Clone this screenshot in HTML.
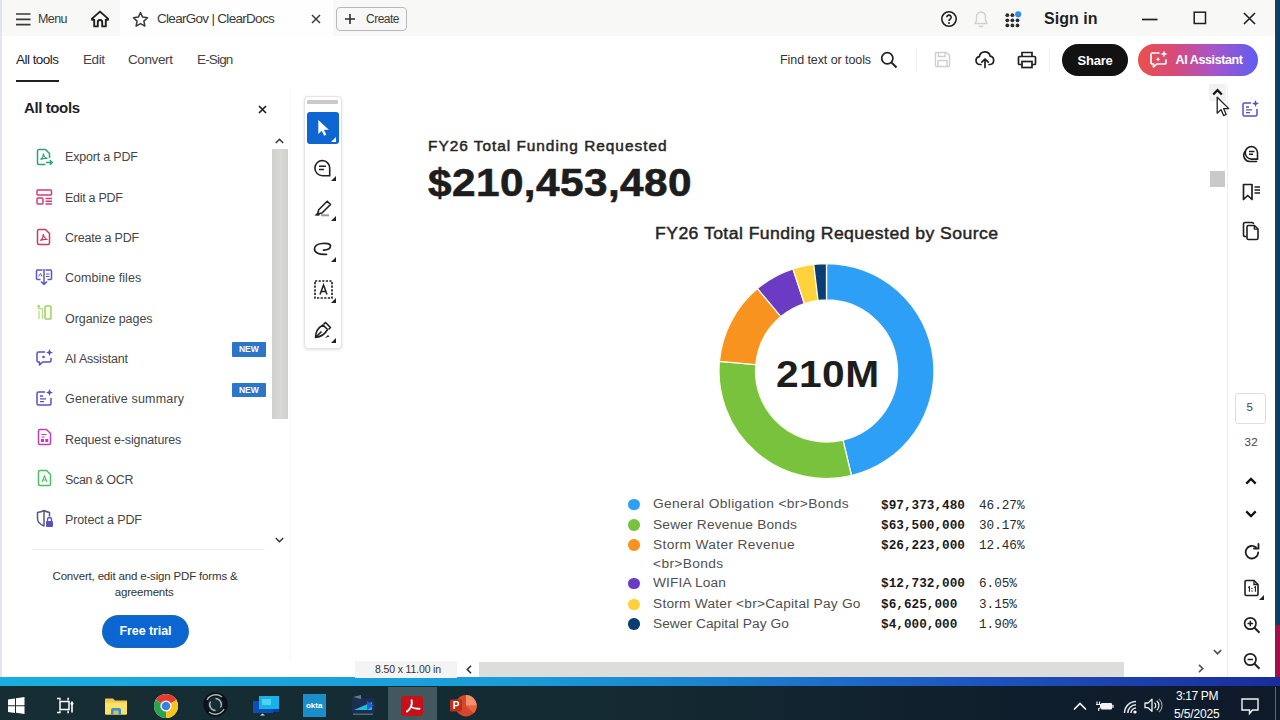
<!DOCTYPE html>
<html lang="en"><head>
<meta charset="utf-8">
<title>ClearGov | ClearDocs</title>
<style>
*{box-sizing:border-box;margin:0;padding:0}
html,body{width:1280px;height:720px;overflow:hidden}
body{position:relative;background:#0b2a66;font-family:"Liberation Sans",sans-serif;color:#2c2c2c}
.abs{position:absolute}
.t{position:absolute;white-space:nowrap;line-height:1}
svg{position:absolute;overflow:visible}
/* desktop strips */
#deskR{left:1274.5px;top:0;width:6px;height:625px;background:linear-gradient(90deg,#17434f 0,#17434f 2px,#063a7c 3.5px)}
#deskR2{left:1274.5px;top:625px;width:6px;height:53px;background:#a40f47}
#band{left:0;top:677px;width:1280px;height:10px;background:linear-gradient(90deg,#19aee0 0%,#1a9cd8 40%,#1c84d0 55%,#1d58c2 75%,#1a2c9c 100%)}
#taskbar{left:0;top:686px;width:1280px;height:34px;background:linear-gradient(90deg,#162d34 0%,#152b33 45%,#0f1e2c 80%,#0e1a2a 100%)}
/* window */
#win{left:0;top:0;width:1275px;height:678px;background:#fff}
#titlebar{left:0;top:0;width:1275px;height:36px;background:#f8f8f7}
#tab{left:120px;top:0;width:213px;height:36.5px;background:#fefefe}
#edgeL{left:0;top:0;width:1.5px;height:678px;background:#e2e2fa}
</style>
</head>
<body>
<div id="win" class="abs"></div>
<div id="titlebar" class="abs"></div>
<div id="tab" class="abs"></div>
<div id="edgeL" class="abs"></div>
<div id="deskR" class="abs"></div>
<div id="deskR2" class="abs"></div>
<div id="band" class="abs"></div>
<div id="taskbar" class="abs"></div>
<!--TITLEBAR-->
<svg style="left:16px;top:12px" width="15" height="15" viewBox="0 0 15 15"><path d="M0 2h14.5M0 7.3h14.5M0 12.6h14.5" stroke="#3a3a3a" stroke-width="1.7" fill="none"></path></svg>
<span class="t" style="font-size: 12.5px; color: rgb(58, 58, 58); letter-spacing: -0.57px; left: 38px; top: 12.9px;">Menu</span>
<svg style="left:90px;top:10px" width="20" height="18" viewBox="0 0 20 18"><path d="M2 8.6 10 1.6l8 7v1.2h-2.2v6.6h-3.6v-4.2a2.2 2.2 0 0 0-4.4 0v4.2H4.200V9.800H2z" stroke="#1f1f1f" stroke-width="1.9" fill="none" stroke-linejoin="round"></path></svg>
<svg style="left:132px;top:11px" width="17" height="17" viewBox="0 0 17 17"><path d="M8.500 1.500l2.100 4.600 5 .6-3.700 3.400 1 5-4.400-2.500-4.400 2.500 1-5L1.400 6.700l5-.6z" stroke="#3a3a3a" stroke-width="1.500" fill="none" stroke-linejoin="round"></path></svg>
<span class="t" style="font-size: 13.5px; color: rgb(58, 58, 58); letter-spacing: -0.702px; left: 157px; top: 12.41px;">ClearGov | ClearDocs</span>
<svg style="left:311px;top:14px" width="10" height="10" viewBox="0 0 10 10"><path d="M1 1l8 8M9 1l-8 8" stroke="#3a3a3a" stroke-width="1.500" fill="none"></path></svg>
<div class="abs" style="left:336px;top:7px;width:71px;height:24px;border:1px solid #b9b9b9;border-radius:4px;background:#f8f8f8"></div>
<svg style="left:345px;top:14px" width="10" height="10" viewBox="0 0 10 10"><path d="M5 0v10M0 5h10" stroke="#2c2c2c" stroke-width="1.600" fill="none"></path></svg>
<span class="t" style="font-size: 12px; color: rgb(58, 58, 58); letter-spacing: -0.505px; left: 366px; top: 13.14px;">Create</span>
<svg style="left:940px;top:10px" width="18" height="18" viewBox="0 0 18 18"><circle cx="9" cy="9" r="7.200" stroke="#222" stroke-width="1.600" fill="none"></circle><path d="M6.800 7.300a2.200 2.200 0 1 1 3.300 1.900c-.8.500-1.100.9-1.100 1.700" stroke="#222" stroke-width="1.600" fill="none"></path><circle cx="9" cy="13" r="1" fill="#222"></circle></svg>
<svg style="left:973px;top:10px" width="16" height="18" viewBox="0 0 16 18"><path d="M8 2a4.500 4.500 0 0 0-4.500 4.500v4L2 13.500h12l-1.500-3v-4A4.500 4.500 0 0 0 8 2zM6.300 15.500a1.800 1.800 0 0 0 3.400 0" stroke="#d2d2d2" stroke-width="1.500" fill="none" stroke-linejoin="round"></path></svg>
<svg style="left:1005px;top:11px" width="18" height="17" viewBox="0 0 18 17"><g fill="#2c2c2c"><circle cx="2.3" cy="4.2" r="1.900"></circle><circle cx="2.3" cy="9.3" r="1.900"></circle><circle cx="2.3" cy="14.4" r="1.900"></circle><circle cx="7.4" cy="4.2" r="1.900"></circle><circle cx="7.4" cy="9.3" r="1.900"></circle><circle cx="7.4" cy="14.4" r="1.900"></circle><circle cx="12.5" cy="9.3" r="1.900"></circle><circle cx="12.5" cy="14.4" r="1.900"></circle></g><circle cx="13.200" cy="3.300" r="3.100" fill="#2f8fe6"></circle></svg>
<span class="t" style="font-size: 16px; font-weight: 700; color: rgb(31, 31, 31); letter-spacing: 0.025px; left: 1044px; top: 10.69px;">Sign in</span>
<svg style="left:1142px;top:18px" width="16" height="3" viewBox="0 0 16 3"><path d="M0 1.500h15.500" stroke="#1f1f1f" stroke-width="1.700"></path></svg>
<svg style="left:1193px;top:11px" width="14" height="14" viewBox="0 0 14 14"><rect x="1.200" y="1.200" width="11.300" height="11.300" stroke="#1f1f1f" stroke-width="1.500" fill="none"></rect></svg>
<svg style="left:1243px;top:12px" width="13" height="13" viewBox="0 0 13 13"><path d="M1 1l11 11M12 1L1 12" stroke="#1f1f1f" stroke-width="1.600" fill="none"></path></svg>
<!--TOOLBAR-->
<span class="t" style="font-size: 13.5px; color: rgb(31, 31, 31); letter-spacing: -0.531px; left: 16px; top: 53.41px;">All tools</span>
<div class="abs" style="left:16px;top:80px;width:43px;height:2px;background:#222"></div>
<span class="t" style="font-size: 13.5px; color: rgb(68, 68, 68); letter-spacing: -0.441px; left: 83px; top: 53.41px;">Edit</span>
<span class="t" style="font-size: 13.5px; color: rgb(68, 68, 68); letter-spacing: -0.397px; left: 128px; top: 53.41px;">Convert</span>
<span class="t" style="font-size: 13.5px; color: rgb(68, 68, 68); letter-spacing: -0.839px; left: 197px; top: 53.41px;">E-Sign</span>
<span class="t" style="font-size: 12.5px; color: rgb(51, 51, 51); letter-spacing: -0.078px; left: 780px; top: 53.9px;">Find text or tools</span>
<svg style="left:880px;top:51px" width="18" height="18" viewBox="0 0 18 18"><circle cx="7.300" cy="7.300" r="5.600" stroke="#222" stroke-width="1.700" fill="none"></circle><path d="M11.500 11.500l5 5" stroke="#222" stroke-width="1.900"></path></svg>
<div class="abs" style="left:916px;top:48px;width:1px;height:24px;background:#f1f1f1"></div>
<svg style="left:934px;top:51px" width="17" height="17" viewBox="0 0 17 17"><path d="M1.500 2.500a1 1 0 0 1 1-1h10l3 3v10a1 1 0 0 1-1 1h-12a1 1 0 0 1-1-1zM4.500 1.500v4h6.500v-4M4 15.500v-6h9v6" stroke="#cfcfcf" stroke-width="1.400" fill="none"></path></svg>
<svg style="left:975px;top:50px" width="20" height="19" viewBox="0 0 20 19"><path d="M6 14.500H5a4 4 0 0 1-.6-7.950A5.500 5.500 0 0 1 15.200 6.200 4.200 4.200 0 0 1 15 14.500h-1" stroke="#1f1f1f" stroke-width="1.700" fill="none" stroke-linecap="round"></path><path d="M10 17.500v-8M6.800 12.200 10 9l3.200 3.200" stroke="#1f1f1f" stroke-width="1.700" fill="none" stroke-linecap="round" stroke-linejoin="round"></path></svg>
<svg style="left:1017px;top:51px" width="20" height="18" viewBox="0 0 20 18"><path d="M5 5.500v-4h10v4M5 13.500H2.500a1 1 0 0 1-1-1v-6a1 1 0 0 1 1-1h15a1 1 0 0 1 1 1v6a1 1 0 0 1-1 1H15" stroke="#1f1f1f" stroke-width="1.700" fill="none"></path><rect x="5" y="10.500" width="10" height="6" stroke="#1f1f1f" stroke-width="1.700" fill="none"></rect></svg>
<div class="abs" style="left:1049px;top:48px;width:1px;height:24px;background:#f1f1f1"></div>
<div class="abs" style="left:1061.500px;top:43.500px;width:66.500px;height:32px;border-radius:16px;background:#121212"></div>
<span class="t" style="font-size: 13px; font-weight: 700; color: rgb(255, 255, 255); letter-spacing: -0.228px; left: 1077.5px; top: 53.66px;">Share</span>
<div class="abs" style="left:1137.500px;top:43.500px;width:120px;height:32px;border-radius:16px;background:linear-gradient(90deg,#e9514c 0%,#d84a78 30%,#a855c8 62%,#5f5df2 100%)"></div>
<svg style="left:1149px;top:50px" width="20" height="20" viewBox="0 0 20 20"><path d="M10.500 3H3.500a1.500 1.500 0 0 0-1.500 1.500v8a1.500 1.500 0 0 0 1.500 1.500h1v3l3.200-3h7.800a1.500 1.500 0 0 0 1.500-1.500V9.500" stroke="#fff" stroke-width="1.700" fill="none" stroke-linejoin="round"></path><path d="M15 .5l1 2.500 2.500 1-2.500 1-1 2.500-1-2.500-2.500-1 2.500-1z" fill="#fff"></path><path d="M9 7l.7 1.600 1.600.7-1.600.7L9 11.600l-.7-1.600-1.600-.7 1.600-.7z" fill="#fff"></path></svg>
<span class="t" style="font-size: 12.5px; font-weight: 700; color: rgb(255, 255, 255); letter-spacing: -0.398px; left: 1175.5px; top: 53.9px;">AI Assistant</span>
<!--LEFTPANEL-->
<div class="abs" style="left:290px;top:86px;width:1px;height:575px;background:#f9f9f9"></div>
<span class="t" style="font-size: 15px; font-weight: 700; color: rgb(31, 31, 31); letter-spacing: -0.397px; left: 24px; top: 100.18px;">All tools</span>
<svg style="left:257.500px;top:105px" width="9" height="9" viewBox="0 0 9 9"><path d="M1 1l7 7M8 1L1 8" stroke="#1f1f1f" stroke-width="1.700" fill="none"></path></svg>
<svg style="left:275px;top:138px" width="9" height="6" viewBox="0 0 9 6"><path d="M.8 5l3.700-3.700L8.200 5" stroke="#333" stroke-width="1.500" fill="none"></path></svg>
<div class="abs" style="left:272px;top:149px;width:16px;height:270px;background:linear-gradient(90deg,#cfcfcc,#d8d8d5 50%,#cfcfcc)"></div>
<svg style="left:275px;top:537px" width="9" height="6" viewBox="0 0 9 6"><path d="M.8 1l3.700 3.700L8.200 1" stroke="#333" stroke-width="1.500" fill="none"></path></svg>
<span class="t" style="font-size: 12.5px; color: rgb(70, 70, 70); letter-spacing: -0.194px; left: 65px; top: 151.4px;">Export a PDF</span>
<span class="t" style="font-size: 12.5px; color: rgb(70, 70, 70); letter-spacing: -0.294px; left: 65px; top: 191.9px;">Edit a PDF</span>
<span class="t" style="font-size: 12.5px; color: rgb(70, 70, 70); letter-spacing: -0.21px; left: 65px; top: 231.9px;">Create a PDF</span>
<span class="t" style="font-size: 12.5px; color: rgb(70, 70, 70); letter-spacing: 0.036px; left: 65px; top: 272.4px;">Combine files</span>
<span class="t" style="font-size: 12.5px; color: rgb(70, 70, 70); letter-spacing: -0.055px; left: 65px; top: 312.9px;">Organize pages</span>
<span class="t" style="font-size: 12.5px; color: rgb(70, 70, 70); letter-spacing: -0.218px; left: 65px; top: 352.9px;">AI Assistant</span>
<span class="t" style="font-size: 12.5px; color: rgb(70, 70, 70); letter-spacing: 0.177px; left: 65px; top: 393.2px;">Generative summary</span>
<span class="t" style="font-size: 12.5px; color: rgb(70, 70, 70); letter-spacing: -0.131px; left: 65px; top: 433.5px;">Request e-signatures</span>
<span class="t" style="font-size: 12.5px; color: rgb(70, 70, 70); letter-spacing: -0.346px; left: 65px; top: 473.9px;">Scan &amp; OCR</span>
<span class="t" style="font-size: 12.5px; color: rgb(70, 70, 70); letter-spacing: -0.131px; left: 65px; top: 514.2px;">Protect a PDF</span>
<div class="abs" style="left:232px;top:342.2px;width:33.500px;height:14.500px;background:#2b76c9;border-radius:1px"></div>
<span class="t" style="font-size: 8.5px; font-weight: 700; color: rgb(255, 255, 255); left: 238.88px; top: 345.45px;">NEW</span>
<div class="abs" style="left:232px;top:382.5px;width:33.500px;height:14.500px;background:#2b76c9;border-radius:1px"></div>
<span class="t" style="font-size: 8.5px; font-weight: 700; color: rgb(255, 255, 255); left: 238.88px; top: 385.75px;">NEW</span>
<div class="abs" style="left:32px;top:549px;width:233px;height:1px;background:#f0f0f0"></div>
<span class="t" style="font-size: 11.5px; color: rgb(51, 51, 51); letter-spacing: -0.17px; left: 52.5px; top: 571.39px;">Convert, edit and e-sign PDF forms &amp;</span>
<span class="t" style="font-size: 11.5px; color: rgb(51, 51, 51); letter-spacing: -0.193px; left: 114.8px; top: 586.89px;">agreements</span>
<div class="abs" style="left:103px;top:616px;width:85px;height:31px;border-radius:16px;background:#0c66d2;box-shadow:0 0 0 1px #1a6f9c"></div>
<span class="t" style="font-size: 12.5px; font-weight: 700; color: rgb(255, 255, 255); letter-spacing: -0.081px; left: 119.46px; top: 625.4px;">Free trial</span>
<!--LPICONS-->
<svg style="left:35.5px;top:147.5px" width="17" height="18" viewBox="0 0 17 18"><path d="M9.500 16.500H3a1.500 1.500 0 0 1-1.500-1.500V3A1.500 1.500 0 0 1 3 1.500h6.500l4 4V10" stroke="#2f9e7d" stroke-width="1.500" fill="none" stroke-linejoin="round"></path><path d="M4.500 11.500c1.500-1 3-3.500 3-6 0 2.500 2 4.500 4 5-2.500-.3-5 .2-7 1z" stroke="#2f9e7d" stroke-width="1.100" fill="none"></path><path d="M10 14.500h6M13.800 12.200l2.400 2.300-2.400 2.300" stroke="#2f9e7d" stroke-width="1.500" fill="none"></path></svg>
<svg style="left:35.5px;top:189px" width="17" height="16" viewBox="0 0 17 16"><rect x="1" y="1" width="14.500" height="5" rx="1" stroke="#cf3a82" stroke-width="1.500" fill="none"></rect><rect x="1" y="9" width="6" height="6" rx="1" stroke="#cf3a82" stroke-width="1.500" fill="none"></rect><path d="M9.500 9.500h6.500M9.500 12.200h6.500M9.500 15h6.500" stroke="#cf3a82" stroke-width="1.400"></path></svg>
<svg style="left:35.5px;top:228px" width="16" height="18" viewBox="0 0 16 18"><path d="M3 1.500h6.500l4 4V15a1.500 1.500 0 0 1-1.500 1.500H3A1.500 1.500 0 0 1 1.500 15V3A1.500 1.500 0 0 1 3 1.500z" stroke="#cc3a5e" stroke-width="1.500" fill="none" stroke-linejoin="round"></path><path d="M4.300 12.500c1.500-1 3-4 3-6.500 0 2.500 2.200 5 4.200 5.500-2.500-.4-5.200.2-7.200 1z" stroke="#cc3a5e" stroke-width="1.200" fill="none"></path></svg>
<svg style="left:35px;top:268px" width="18" height="18" viewBox="0 0 18 18"><path d="M7.500 2H2.500a1 1 0 0 0-1 1v7.500a1 1 0 0 0 1 1h3M10.500 2h5a1 1 0 0 1 1 1v7.500a1 1 0 0 1-1 1h-3" stroke="#5359c9" stroke-width="1.500" fill="none"></path><path d="M9 1v15M6 13.500l3 3 3-3" stroke="#5359c9" stroke-width="1.500" fill="none"></path><path d="M3.500 8.500l2-3 1.500 3M11 6h3.500M11 8.500h3.500" stroke="#5359c9" stroke-width="1" fill="none"></path></svg>
<svg style="left:35.5px;top:303.5px" width="17" height="17" viewBox="0 0 17 17"><rect x="9" y="2" width="6" height="13" rx="1" stroke="#9ad255" stroke-width="1.500" fill="none"></rect><path d="M6.500 4.500v10.500M3 15V6.500M1.500 4.500h5" stroke="#b5dd88" stroke-width="1.300" fill="none"></path><path d="M1 2.200l2.500-1.700v3.400z" fill="#86c540"></path></svg>
<svg style="left:34.5px;top:349px" width="19" height="18" viewBox="0 0 19 18"><path d="M10 3H3.500A1.500 1.500 0 0 0 2 4.500v7A1.500 1.500 0 0 0 3.500 13h1v3l3.200-3h6.800a1.500 1.500 0 0 0 1.500-1.500V9" stroke="#5a4fc4" stroke-width="1.500" fill="none" stroke-linejoin="round"></path><path d="M14.500 0l1 2.500 2.500 1-2.500 1-1 2.500-1-2.500-2.500-1 2.500-1z" fill="#5a4fc4"></path><circle cx="8.500" cy="8" r="1.300" fill="#5a4fc4"></circle></svg>
<svg style="left:34.5px;top:389px" width="19" height="18" viewBox="0 0 19 18"><path d="M10 3H3.500A1.500 1.500 0 0 0 2 4.500v10A1.500 1.500 0 0 0 3.500 16h11a1.500 1.500 0 0 0 1.500-1.500V9" stroke="#5a4fc4" stroke-width="1.500" fill="none" stroke-linejoin="round"></path><path d="M14.500 0l1 2.500 2.500 1-2.500 1-1 2.500-1-2.500-2.500-1 2.500-1z" fill="#5a4fc4"></path><path d="M5 7h3M5 9.800h6M5 12.600h4" stroke="#5a4fc4" stroke-width="1.300"></path></svg>
<svg style="left:36.5px;top:428px" width="16" height="18" viewBox="0 0 16 18"><path d="M3 1.500h6.500l4 4V15a1.500 1.500 0 0 1-1.500 1.500H3A1.500 1.500 0 0 1 1.500 15V3A1.500 1.500 0 0 1 3 1.500z" stroke="#c23cba" stroke-width="1.500" fill="none" stroke-linejoin="round"></path><path d="M4.500 6.500h5M4.500 9h3" stroke="#c23cba" stroke-width="1.200"></path><rect x="4" y="11" width="3" height="3" fill="#c23cba"></rect><rect x="8.300" y="11" width="3" height="3" fill="#c23cba"></rect></svg>
<svg style="left:36.5px;top:469px" width="16" height="18" viewBox="0 0 16 18"><path d="M3 1.500h6.500l4 4V15a1.500 1.500 0 0 1-1.500 1.500H3A1.500 1.500 0 0 1 1.500 15V3A1.500 1.500 0 0 1 3 1.500z" stroke="#4fbb62" stroke-width="1.500" fill="none" stroke-linejoin="round"></path><path d="M5 13l2.500-6 2.500 6M6 11h3" stroke="#4fbb62" stroke-width="1.100" fill="none"></path></svg>
<svg style="left:35.5px;top:509px" width="18" height="19" viewBox="0 0 18 19"><path d="M8 1.500C5.500 2.800 3.500 3.200 1.500 3.500v6c0 3.500 3 6 6.500 7.500V1.500zM8 1.500c2 1 3.500 1.500 5.500 2v4" stroke="#555c78" stroke-width="1.500" fill="none" stroke-linejoin="round"></path><rect x="10" y="12" width="7" height="6" rx="1" fill="#5a4fc4"></rect><path d="M11.500 12v-1.500a2 2 0 0 1 4 0V12" stroke="#5a4fc4" stroke-width="1.300" fill="none"></path></svg>
<!--QUICKTOOLS-->
<div class="abs" style="left:303.500px;top:95.500px;width:38.500px;height:253.500px;background:#fff;border:1px solid #e3e3e3;border-radius:4px;box-shadow:0 1px 3px rgba(0,0,0,.12)"></div>
<div class="abs" style="left:307px;top:99.500px;width:31px;height:4px;background:#c9c9c9;border-radius:1px"></div>
<div class="abs" style="left:306.500px;top:112px;width:32.500px;height:32px;background:#0d66d2;border-radius:3px"></div>
<svg style="left:316px;top:119px" width="14" height="18" viewBox="0 0 14 18"><path d="M2.300 1v14l3.500-3.300 2.300 5 2.200-1-2.300-4.900h4.800z" fill="#fff"></path></svg>
<svg style="left:330.5px;top:136.5px" width="5" height="5" viewBox="0 0 5 5"><path d="M5 0v5H0z" fill="#fff"></path></svg>
<svg style="left:312.5px;top:158.5px" width="19" height="19" viewBox="0 0 19 19"><path d="M9.500 1.500a7.600 7.600 0 1 0 0 15.200h7.200V9.100A7.600 7.600 0 0 0 9.500 1.500z" stroke="#222" stroke-width="1.600" fill="none"></path><path d="M6 7.200h7M6 10.400h5" stroke="#222" stroke-width="1.500"></path></svg>
<svg style="left:330.5px;top:176px" width="5" height="5" viewBox="0 0 5 5"><path d="M5 0v5H0z" fill="#222"></path></svg>
<svg style="left:313.5px;top:199.5px" width="19" height="17" viewBox="0 0 19 17"><path d="M13.200 1.200l3.300 3.300L8 13l-4.300 1 1-4.300z" stroke="#222" stroke-width="1.600" fill="none" stroke-linejoin="round"></path><path d="M0.500 15.500l3-3 2.500 2.500-1.500.8z" fill="#222"></path><path d="M7 15.300h8" stroke="#9a9a9a" stroke-width="2"></path></svg>
<svg style="left:330.5px;top:216px" width="5" height="5" viewBox="0 0 5 5"><path d="M5 0v5H0z" fill="#222"></path></svg>
<svg style="left:313px;top:242px" width="19" height="14" viewBox="0 0 19 14"><path d="M10.500 8.200C14 8 17.500 6.500 17.500 4 17.500 1.500 13 1 9 1.500 5 2 1.500 4 1.500 7c0 3.500 4.500 6 12 5.300" stroke="#222" stroke-width="1.700" fill="none" stroke-linecap="round"></path></svg>
<svg style="left:330.5px;top:256.5px" width="5" height="5" viewBox="0 0 5 5"><path d="M5 0v5H0z" fill="#222"></path></svg>
<svg style="left:313.5px;top:280px" width="19" height="19" viewBox="0 0 19 19"><rect x="1" y="1" width="17" height="17" stroke="#222" stroke-width="1.700" stroke-dasharray="2.200 1.400" fill="none"></rect><path d="M6 14.500l3.500-9.500 3.500 9.500M7.200 11.500h4.600" stroke="#222" stroke-width="1.500" fill="none"></path></svg>
<svg style="left:330.5px;top:297.5px" width="5" height="5" viewBox="0 0 5 5"><path d="M5 0v5H0z" fill="#222"></path></svg>
<svg style="left:313.5px;top:321px" width="18" height="18" viewBox="0 0 18 18"><path d="M1.500 16.500c0-5 2-9.500 7.500-12.500l4.500 4.500C10.500 14 6.500 16 1.500 16.500zM1.500 16.500l6-6" stroke="#222" stroke-width="1.600" fill="none" stroke-linejoin="round"></path><path d="M9.500 3.500l2-2 5 5-2 2" stroke="#222" stroke-width="1.600" fill="none" stroke-linejoin="round"></path><path d="M11 17l3-3 1.500 1.500z" fill="#222"></path></svg>
<svg style="left:330.5px;top:337.5px" width="5" height="5" viewBox="0 0 5 5"><path d="M5 0v5H0z" fill="#222"></path></svg>
<!--DOC-->
<span class="t doc" style="font-size: 14px; color: rgb(38, 38, 38); -webkit-text-stroke: 0.45px rgb(38, 38, 38); letter-spacing: 0.891px; transform-origin: 0px 50%; transform: scaleX(1.1); left: 428.3px; top: 139.17px;">FY26 Total Funding Requested</span>
<span class="t doc" style="font-size: 38.5px; font-weight: 700; color: rgb(29, 29, 29); -webkit-text-stroke: 0.6px rgb(29, 29, 29); letter-spacing: 0.374px; transform-origin: 0px 50%; transform: scaleX(1.1); left: 428px; top: 163.51px;">$210,453,480</span>
<span class="t doc" style="font-size: 16px; color: rgb(38, 38, 38); -webkit-text-stroke: 0.45px rgb(38, 38, 38); letter-spacing: 0.408px; transform-origin: 0px 50%; transform: scaleX(1.1); left: 654.8px; top: 225.69px;">FY26 Total Funding Requested by Source</span>
<svg style="left:0;top:0" width="1280" height="720" viewBox="0 0 1280 720"><path d="M826.50 263.50A107.5 107.5 0 0 1 851.46 475.56L842.99 440.06A71 71 0 0 0 826.50 300.00Z" fill="#2d9ff6" stroke="#fbfbe8" stroke-width="1.300" stroke-linejoin="round"></path><path d="M851.46 475.56A107.5 107.5 0 0 1 719.44 361.29L755.79 364.58A71 71 0 0 0 842.99 440.06Z" fill="#78c23e" stroke="#fbfbe8" stroke-width="1.300" stroke-linejoin="round"></path><path d="M719.44 361.29A107.5 107.5 0 0 1 757.46 288.60L780.90 316.58A71 71 0 0 0 755.79 364.58Z" fill="#f7931e" stroke="#fbfbe8" stroke-width="1.300" stroke-linejoin="round"></path><path d="M757.46 288.60A107.5 107.5 0 0 1 792.96 268.87L804.35 303.54A71 71 0 0 0 780.90 316.58Z" fill="#6c3bc4" stroke="#fbfbe8" stroke-width="1.300" stroke-linejoin="round"></path><path d="M792.96 268.87A107.5 107.5 0 0 1 813.70 264.27L818.04 300.51A71 71 0 0 0 804.35 303.54Z" fill="#fdd23c" stroke="#fbfbe8" stroke-width="1.300" stroke-linejoin="round"></path><path d="M813.70 264.27A107.5 107.5 0 0 1 826.50 263.50L826.50 300.00A71 71 0 0 0 818.04 300.51Z" fill="#0a3d73" stroke="#fbfbe8" stroke-width="1.300" stroke-linejoin="round"></path></svg>
<span class="t doc" style="font-size: 37px; font-weight: 700; color: rgb(29, 29, 29); letter-spacing: 0.382px; transform-origin: 0px 50%; transform: scaleX(1.1); left: 776.46px; top: 356.24px;">210M</span>
<div class="abs" style="left:628px;top:498.8px;width:11.500px;height:11.500px;border-radius:50%;background:#2d9ff6"></div>
<span class="t doc" style="font-size: 12.5px; color: rgb(80, 80, 80); letter-spacing: 0.332px; transform-origin: 0px 50%; transform: scaleX(1.1); left: 652.8px; top: 498.3px;">General Obligation &lt;br&gt;Bonds</span>
<span class="t" style="font-family: &quot;Liberation Mono&quot;, monospace; font-size: 12.7px; font-weight: 700; color: rgb(26, 26, 26); letter-spacing: 0.021px; left: 881px; top: 499.5px;">$97,373,480</span>
<span class="t" style="font-family: &quot;Liberation Mono&quot;, monospace; font-size: 12.7px; color: rgb(42, 42, 42); letter-spacing: -0.031px; left: 979px; top: 499.5px;">46.27%</span>
<div class="abs" style="left:628px;top:519.0px;width:11.500px;height:11.500px;border-radius:50%;background:#78c23e"></div>
<span class="t doc" style="font-size: 12.5px; color: rgb(80, 80, 80); letter-spacing: 0.161px; transform-origin: 0px 50%; transform: scaleX(1.1); left: 652.8px; top: 518.5px;">Sewer Revenue Bonds</span>
<span class="t" style="font-family: &quot;Liberation Mono&quot;, monospace; font-size: 12.7px; font-weight: 700; color: rgb(26, 26, 26); letter-spacing: 0.021px; left: 881px; top: 519.7px;">$63,500,000</span>
<span class="t" style="font-family: &quot;Liberation Mono&quot;, monospace; font-size: 12.7px; color: rgb(42, 42, 42); letter-spacing: -0.031px; left: 979px; top: 519.7px;">30.17%</span>
<div class="abs" style="left:628px;top:539.1px;width:11.500px;height:11.500px;border-radius:50%;background:#f7931e"></div>
<span class="t doc" style="font-size: 12.5px; color: rgb(80, 80, 80); letter-spacing: 0.31px; transform-origin: 0px 50%; transform: scaleX(1.1); left: 652.8px; top: 538.6px;">Storm Water Revenue</span>
<span class="t" style="font-family: &quot;Liberation Mono&quot;, monospace; font-size: 12.7px; font-weight: 700; color: rgb(26, 26, 26); letter-spacing: 0.021px; left: 881px; top: 539.8px;">$26,223,000</span>
<span class="t" style="font-family: &quot;Liberation Mono&quot;, monospace; font-size: 12.7px; color: rgb(42, 42, 42); letter-spacing: -0.031px; left: 979px; top: 539.8px;">12.46%</span>
<div class="abs" style="left:628px;top:577.5px;width:11.500px;height:11.500px;border-radius:50%;background:#6c3bc4"></div>
<span class="t doc" style="font-size: 12.5px; color: rgb(80, 80, 80); letter-spacing: 0.105px; transform-origin: 0px 50%; transform: scaleX(1.1); left: 652.8px; top: 577px;">WIFIA Loan</span>
<span class="t" style="font-family: &quot;Liberation Mono&quot;, monospace; font-size: 12.7px; font-weight: 700; color: rgb(26, 26, 26); letter-spacing: 0.021px; left: 881px; top: 578.2px;">$12,732,000</span>
<span class="t" style="font-family: &quot;Liberation Mono&quot;, monospace; font-size: 12.7px; color: rgb(42, 42, 42); letter-spacing: -0.036px; left: 979px; top: 578.2px;">6.05%</span>
<div class="abs" style="left:628px;top:598.7px;width:11.500px;height:11.500px;border-radius:50%;background:#fdd23c"></div>
<span class="t doc" style="font-size: 12.5px; color: rgb(80, 80, 80); letter-spacing: 0.196px; transform-origin: 0px 50%; transform: scaleX(1.1); left: 652.8px; top: 598.2px;">Storm Water &lt;br&gt;Capital Pay Go</span>
<span class="t" style="font-family: &quot;Liberation Mono&quot;, monospace; font-size: 12.7px; font-weight: 700; color: rgb(26, 26, 26); letter-spacing: 0.026px; left: 881px; top: 599.4px;">$6,625,000</span>
<span class="t" style="font-family: &quot;Liberation Mono&quot;, monospace; font-size: 12.7px; color: rgb(42, 42, 42); letter-spacing: -0.036px; left: 979px; top: 599.4px;">3.15%</span>
<div class="abs" style="left:628px;top:618.1px;width:11.500px;height:11.500px;border-radius:50%;background:#0a3d73"></div>
<span class="t doc" style="font-size: 12.5px; color: rgb(80, 80, 80); letter-spacing: 0.024px; transform-origin: 0px 50%; transform: scaleX(1.1); left: 652.8px; top: 617.6px;">Sewer Capital Pay Go</span>
<span class="t" style="font-family: &quot;Liberation Mono&quot;, monospace; font-size: 12.7px; font-weight: 700; color: rgb(26, 26, 26); letter-spacing: 0.026px; left: 881px; top: 618.8px;">$4,000,000</span>
<span class="t" style="font-family: &quot;Liberation Mono&quot;, monospace; font-size: 12.7px; color: rgb(42, 42, 42); letter-spacing: -0.036px; left: 979px; top: 618.8px;">1.90%</span>
<span class="t doc" style="font-size: 12.5px; color: rgb(80, 80, 80); letter-spacing: 0.324px; transform-origin: 0px 50%; transform: scaleX(1.1); left: 652.8px; top: 558px;">&lt;br&gt;Bonds</span>
<!--RIGHTRAIL-->
<div class="abs" style="left:1226.500px;top:86px;width:1px;height:591px;background:#eeeeee"></div>
<div class="abs" style="left:1209px;top:84px;width:17px;height:17px;background:#f1f1f1"></div>
<svg style="left:1211.5px;top:88px" width="11" height="8" viewBox="0 0 11 8"><path d="M1.200 6.500l4.300-4.300 4.300 4.300" stroke="#111" stroke-width="2.300" fill="none"></path></svg>
<div class="abs" style="left:1210px;top:171px;width:15px;height:16px;background:#c9c9c9"></div>
<svg style="left:1215.5px;top:95.5px" width="14" height="22" viewBox="0 0 14 22"><path d="M1.200 1.200v16l3.800-3.600 2.600 6 2.600-1.100-2.600-5.900h5.200z" fill="#fff" stroke="#222" stroke-width="1.300" stroke-linejoin="round"></path></svg>
<svg style="left:1240.5px;top:99.5px" width="19" height="18" viewBox="0 0 19 18"><path d="M10 3H3.500A1.500 1.500 0 0 0 2 4.500v10A1.500 1.500 0 0 0 3.500 16h11a1.500 1.500 0 0 0 1.500-1.500V9" stroke="#5a4fc4" stroke-width="1.500" fill="none" stroke-linejoin="round"></path><path d="M14.500 0l1 2.500 2.500 1-2.500 1-1 2.500-1-2.500-2.500-1 2.500-1z" fill="#5a4fc4"></path><path d="M5 7h3M5 9.800h6M5 12.600h4" stroke="#5a4fc4" stroke-width="1.300"></path></svg>
<svg style="left:1240.5px;top:145px" width="19" height="18" viewBox="0 0 19 18"><path d="M10.500 1.500a6.300 6.300 0 1 0 0 12.600h6V7.800a6.300 6.300 0 0 0-6-6.300z" stroke="#1f1f1f" stroke-width="1.600" fill="none"></path><path d="M4 6.500a6.300 6.300 0 0 0 4.500 10h7" stroke="#1f1f1f" stroke-width="1.600" fill="none" stroke-linecap="round"></path><path d="M8 6.500h5.500M8 9.300h4" stroke="#1f1f1f" stroke-width="1.400"></path></svg>
<svg style="left:1241.5px;top:183px" width="19" height="18" viewBox="0 0 19 18"><path d="M1.500 1.500h8.500v15l-4.250-4-4.250 4z" stroke="#1f1f1f" stroke-width="1.700" fill="none" stroke-linejoin="round"></path><path d="M12.500 4h5.500M12.500 7h5.500M12.500 10h5.500" stroke="#1f1f1f" stroke-width="1.400"></path></svg>
<svg style="left:1241.5px;top:221px" width="18" height="20" viewBox="0 0 18 20"><path d="M4.500 15.500h-1.500a1.500 1.500 0 0 1-1.500-1.500V3a1.500 1.500 0 0 1 1.500-1.500h7a1.500 1.500 0 0 1 1.500 1.500" stroke="#1f1f1f" stroke-width="1.600" fill="none"></path><path d="M6.500 4.500h6l3.500 3.500v9a1.500 1.500 0 0 1-1.500 1.500h-8A1.500 1.500 0 0 1 5 17V6a1.500 1.500 0 0 1 1.500-1.500z" stroke="#1f1f1f" stroke-width="1.600" fill="#fff" stroke-linejoin="round"></path><path d="M12.300 4.800V8.200h3.400" stroke="#1f1f1f" stroke-width="1.300" fill="none"></path></svg>
<div class="abs" style="left:1234.500px;top:392.500px;width:31px;height:31px;border:1px solid #dedede;border-radius:3px;background:#fff"></div>
<span class="t" style="font-size: 11.5px; color: rgb(68, 68, 68); left: 1246.5px; top: 402.39px;">5</span>
<span class="t" style="font-size: 11.5px; color: rgb(68, 68, 68); letter-spacing: 0.352px; left: 1244.43px; top: 437.39px;">32</span>
<svg style="left:1245px;top:476.5px" width="12" height="8" viewBox="0 0 12 8"><path d="M1.300 6.600l4.700-4.700 4.700 4.700" stroke="#111" stroke-width="2.200" fill="none"></path></svg>
<svg style="left:1245px;top:509.5px" width="12" height="8" viewBox="0 0 12 8"><path d="M1.300 1.400l4.700 4.700 4.700-4.700" stroke="#111" stroke-width="2.200" fill="none"></path></svg>
<svg style="left:1242.5px;top:543px" width="18" height="18" viewBox="0 0 18 18"><path d="M15.200 9.500a6.300 6.300 0 1 1-2.300-5.200" stroke="#1f1f1f" stroke-width="1.800" fill="none" stroke-linecap="round"></path><path d="M11 5.500h4.500V1" stroke="#1f1f1f" stroke-width="1.800" fill="none" stroke-linejoin="round" stroke-linecap="round"></path></svg>
<svg style="left:1243.5px;top:578.5px" width="16" height="18" viewBox="0 0 16 18"><path d="M2.500 1.500h7.500l4 4V15a1.500 1.500 0 0 1-1.500 1.500h-10A1.500 1.500 0 0 1 1 15V3A1.500 1.500 0 0 1 2.500 1.500z" stroke="#1f1f1f" stroke-width="1.600" fill="none" stroke-linejoin="round"></path><path d="M10 1.800v3.700h3.800" stroke="#1f1f1f" stroke-width="1.300" fill="none"></path><path d="M4.200 8.500l1.200-.7v5M10.200 8.500l1.200-.7v5" stroke="#1f1f1f" stroke-width="1.100" fill="none"></path><circle cx="8" cy="9.500" r=".7" fill="#1f1f1f"></circle><circle cx="8" cy="12" r=".7" fill="#1f1f1f"></circle></svg>
<svg style="left:1259px;top:594.5px" width="5" height="5" viewBox="0 0 5 5"><path d="M5 0v5H0z" fill="#222"></path></svg>
<svg style="left:1242.5px;top:616px" width="18" height="18" viewBox="0 0 18 18"><circle cx="7.300" cy="7.500" r="5.700" stroke="#1f1f1f" stroke-width="1.700" fill="none"></circle><path d="M11.500 11.800l5 5" stroke="#1f1f1f" stroke-width="2"></path><path d="M4.500 7.500h5.600M7.300 4.700v5.600" stroke="#1f1f1f" stroke-width="1.500"></path></svg>
<svg style="left:1242.5px;top:652px" width="18" height="18" viewBox="0 0 18 18"><circle cx="7.300" cy="7.500" r="5.700" stroke="#1f1f1f" stroke-width="1.700" fill="none"></circle><path d="M11.500 11.800l5 5" stroke="#1f1f1f" stroke-width="2"></path><path d="M4.500 7.500h5.600" stroke="#1f1f1f" stroke-width="1.500"></path></svg>
<svg style="left:1213px;top:649px" width="9" height="6" viewBox="0 0 9 6"><path d="M.8 1l3.700 3.700L8.200 1" stroke="#555" stroke-width="1.700" fill="none"></path></svg>
<svg style="left:1198px;top:664px" width="6" height="9" viewBox="0 0 6 9"><path d="M1 .8l3.700 3.700L1 8.200" stroke="#555" stroke-width="1.700" fill="none"></path></svg>
<div class="abs" style="left:355px;top:661px;width:102px;height:16.500px;background:#f4f4f4"></div>
<span class="t" style="font-size: 10.5px; color: rgb(51, 51, 51); letter-spacing: -0.141px; left: 375px; top: 663.88px;">8.50 x 11.00 in</span>
<svg style="left:465.5px;top:664.5px" width="6" height="9" viewBox="0 0 6 9"><path d="M5 .8L1.300 4.500 5 8.200" stroke="#333" stroke-width="1.600" fill="none"></path></svg>
<div class="abs" style="left:479px;top:662px;width:645px;height:15px;background:#dddddb"></div>
<!--TASKICONS-->
<div class="abs" style="left:388px;top:686.500px;width:49px;height:33.500px;background:#42575e"></div>
<svg style="left:8px;top:697px" width="17" height="17" viewBox="0 0 17 17"><path d="M0 2.400l7-1v6.800H0zM8 1.300L16.500 0v8.200H8zM0 9.200h7V16l-7-1zM8 9.200h8.500V17L8 15.800z" fill="#fff"></path></svg>
<svg style="left:55.5px;top:696.5px" width="18" height="17" viewBox="0 0 18 17"><rect x="4" y="4.500" width="9" height="8" stroke="#fff" stroke-width="1.500" fill="none"></rect><path d="M1 1.500h3v2M1 15.500h3v-2M13 1.500h-1v2M13 15.500h-1v-2" stroke="#fff" stroke-width="1.300" fill="none"></path><path d="M16 4.500v11" stroke="#fff" stroke-width="1.600"></path><circle cx="16" cy="6.500" r="1.500" fill="#fff"></circle></svg>
<svg style="left:105px;top:696.5px" width="23" height="18" viewBox="0 0 23 18"><path d="M0 2.500a1 1 0 0 1 1-1h7l2 2h12v13a1 1 0 0 1-1 1H1a1 1 0 0 1-1-1z" fill="#f2c94c"></path><path d="M0 5.500h22v11a1 1 0 0 1-1 1H1a1 1 0 0 1-1-1z" fill="#fbe06a"></path><path d="M6 17.500v-4.500a2 2 0 0 1 2-2h6a2 2 0 0 1 2 2v4.500z" fill="#3b8fd6"></path><path d="M8.500 17.500v-3a1 1 0 0 1 1-1h3a1 1 0 0 1 1 1v3z" fill="#d9c25a"></path></svg>
<svg style="left:153.5px;top:693.5px" width="24" height="24" viewBox="0 0 24 24"><circle cx="12" cy="12" r="12" fill="#fff"></circle><path d="M12 12L1.600 6A12 12 0 0 1 22.400 6z" fill="#e33b2e"></path><path d="M12 12L22.400 6A12 12 0 0 1 12 24z" fill="#f7c51d"></path><path d="M12 12L12 24A12 12 0 0 1 1.600 6z" fill="#2ba24c"></path><circle cx="12" cy="12" r="5.600" fill="#fff"></circle><circle cx="12" cy="12" r="4.300" fill="#3d7de6"></circle></svg>
<svg style="left:203px;top:691.5px" width="25" height="25" viewBox="0 0 25 25"><circle cx="12.500" cy="12.500" r="10" stroke="#0b1116" stroke-width="4.500" fill="none"></circle><path d="M4 8a10 10 0 0 1 15-3M21 17a10 10 0 0 1-15 3M12.500 6.500a6 6 0 0 1 5 9M12.500 18.500a6 6 0 0 1-5-9" stroke="#aab3b8" stroke-width="1.400" fill="none"></path></svg>
<svg style="left:253px;top:695.5px" width="27" height="20" viewBox="0 0 27 20"><rect x="0" y="5" width="20" height="12" fill="#0d4fb4"></rect><rect x="6" y="0" width="20" height="13" fill="#18b2ea"></rect><rect x="9" y="3" width="9" height="6" fill="#4fd0f5"></rect><path d="M20 13h6v3h-6z" fill="#0b3f9c"></path><path d="M7 19.500h5l-2.500-2z" fill="#dfe7ea"></path></svg>
<div class="abs" style="left:303px;top:693.500px;width:22.500px;height:23.500px;background:#1a8ec9"></div>
<span class="t" style="font-size: 8px; font-weight: 700; color: rgb(255, 255, 255); left: 305.97px; top: 701.6px;">okta</span>
<svg style="left:350.5px;top:693.5px" width="25" height="22" viewBox="0 0 25 22"><rect x="1" y="4" width="23" height="15" rx="1.500" fill="#1c2f52"></rect><path d="M2 3l8-2v4z" fill="#5f7e9c"></path><path d="M3 16l18-8v8z" fill="#1fc0d8"></path><path d="M16 7l7 4.500-7 4.500z" fill="#1e5fd8"></path><path d="M2 19.500h20v1.500H2z" fill="#556a78"></path></svg>
<svg style="left:401px;top:695.5px" width="22" height="20" viewBox="0 0 22 20"><rect width="22" height="20" rx="3" fill="#c6101a"></rect><path d="M10.600 4.200c.6 2.500.2 4.600-.6 6.400-1 2.200-2.600 4-4.200 5M10 10.600c1.500 1.300 4.500 2.200 8.500 2.200" stroke="#fff" stroke-width="1.900" fill="none" stroke-linecap="round"></path></svg>
<svg style="left:450px;top:694px" width="26" height="23" viewBox="0 0 26 23"><circle cx="16" cy="11.700" r="10.700" fill="#d5472b"></circle><path d="M16 11.700V1a10.700 10.700 0 0 1 10.700 10.700z" fill="#f2906e"></path><path d="M16 11.700h10.700a10.700 10.700 0 0 1-3.100 7.600z" fill="#e8643f"></path><rect x="0" y="5.500" width="12" height="12" rx="1.200" fill="#b7301e"></rect></svg>
<span class="t" style="font-size: 10px; font-weight: 700; color: rgb(255, 255, 255); left: 452.66px; top: 700.82px;">P</span>
<svg style="left:1073px;top:701.5px" width="14" height="9" viewBox="0 0 14 9"><path d="M1 7.500l6-6 6 6" stroke="#f2f2f2" stroke-width="1.700" fill="none"></path></svg>
<svg style="left:1095.5px;top:699.5px" width="18" height="12" viewBox="0 0 18 12"><rect x="5" y="3" width="11" height="6.500" rx="1" fill="#f2f2f2"></rect><rect x="16.300" y="4.800" width="1.300" height="3" fill="#f2f2f2"></rect><path d="M1 1.500v3M3.500 1.500v3M0 4.500h4.500v2.500a1.500 1.500 0 0 1-1.500 1.500h-.3V11" stroke="#f2f2f2" stroke-width="1.100" fill="none"></path></svg>
<svg style="left:1122.5px;top:699.5px" width="15" height="14" viewBox="0 0 15 14"><path d="M1.500 13A11.500 11.500 0 0 1 13 1.500M4.800 13A8.200 8.200 0 0 1 13 4.800M8 13a5 5 0 0 1 5-5" stroke="#dfe3e6" stroke-width="1.500" fill="none"></path><circle cx="12" cy="12" r="1.600" fill="#fff"></circle></svg>
<svg style="left:1143.5px;top:697.5px" width="18" height="15" viewBox="0 0 18 15"><path d="M1 5h3l4-3.700v12L4 9.700H1z" stroke="#f2f2f2" stroke-width="1.300" fill="none" stroke-linejoin="round"></path><path d="M10.500 4.800a3.500 3.500 0 0 1 0 5.400M12.800 2.800a6.300 6.300 0 0 1 0 9.400" stroke="#f2f2f2" stroke-width="1.200" fill="none"></path><path d="M15 .8a9 9 0 0 1 0 13.400" stroke="#8f9aa2" stroke-width="1.100" fill="none"></path></svg>
<span class="t" style="font-size: 12px; color: rgb(255, 255, 255); letter-spacing: -0.386px; left: 1176px; top: 690.34px;">3:17 PM</span>
<span class="t" style="font-size: 12px; color: rgb(255, 255, 255); letter-spacing: -0.14px; left: 1174px; top: 707.64px;">5/5/2025</span>
<svg style="left:1241px;top:697.5px" width="18" height="17" viewBox="0 0 18 17"><path d="M1 1h16v11h-5.500L8.500 15.500V12H1z" stroke="#f2f2f2" stroke-width="1.400" fill="none" stroke-linejoin="miter"></path></svg>
<div class="abs" style="left:1275px;top:687px;width:1px;height:33px;background:#5a6a76"></div>


</body></html>
